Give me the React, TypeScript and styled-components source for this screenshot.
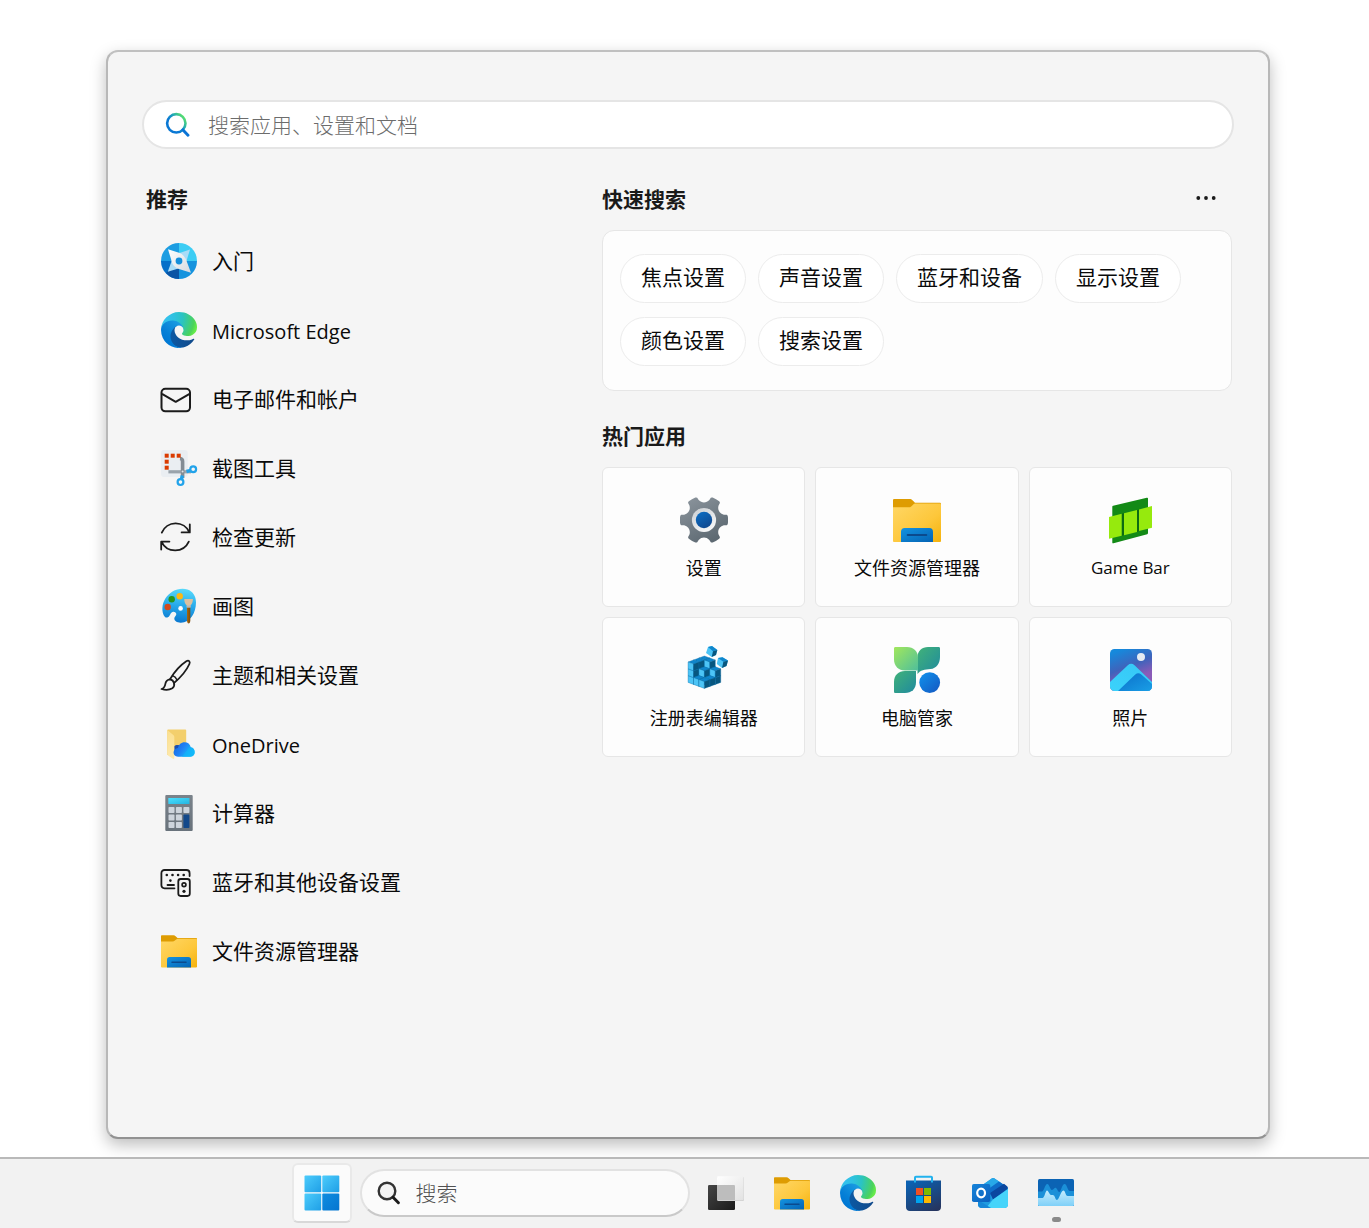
import React from "react";
import styled, { createGlobalStyle } from "styled-components";

const GlobalStyle = createGlobalStyle`
  *, *::before, *::after { box-sizing: border-box; }
  body {
    margin: 0;
    background: #fff;
    color: #0a0a0a;
    font-family: "Open Sans", "Noto Sans CJK SC", sans-serif;
    font-size: 21px;
    line-height: 30px;
  }
  button, input { font: inherit; color: inherit; }
  button { margin: 0; padding: 0; border: 0; background: none; cursor: pointer; }
`;

/* ---------- layout ---------- */

const Desktop = styled.div`
  display: flex;
  flex-direction: column;
  min-height: 100vh;
`;

const Stage = styled.main`
  flex: 1;
  display: flex;
  padding: 50px 99px 18px 106px;
`;

const Panel = styled.section`
  flex: 1;
  min-width: 0;
  padding: 48px 34px;
  background: #f5f5f5;
  border: 2px solid #b8b8b8;
  border-top-color: #c0c0c0;
  border-bottom-color: #929292;
  border-radius: 12px;
  box-shadow: 0 6px 16px rgba(0, 0, 0, 0.26);
`;

const PanelSearch = styled.label`
  display: flex;
  align-items: center;
  gap: 18px;
  height: 49px;
  padding: 0 21px;
  background: #fff;
  border: 2px solid #e5e5e5;
  border-radius: 25px;
`;

const SearchInput = styled.input<{ $tone: string }>`
  flex: 1;
  min-width: 0;
  padding: 0;
  border: 0;
  outline: 0;
  background: transparent;
  font-weight: 300;
  &::placeholder { color: ${(p) => p.$tone}; opacity: 1; }
`;

const Columns = styled.div`
  display: grid;
  grid-template-columns: 46fr 63fr;
  padding-right: 2px;
  margin-top: 35px;
`;

const Heading = styled.h2`
  margin: 0;
  font-size: 21px;
  line-height: 30px;
  font-weight: 700;
  color: #1a1a1a;
`;

const Recommended = styled.section`
  padding-left: 4px;
`;

const AppList = styled.ul`
  list-style: none;
  margin: 13px 0 0;
  padding: 0;
`;

const AppRow = styled.button`
  display: flex;
  align-items: center;
  gap: 14px;
  width: 100%;
  height: 69px;
  padding: 0 14px 1px;
  text-align: left;
`;

const IconSlot = styled.span`
  display: flex;
  align-items: center;
  justify-content: center;
  width: 38px;
  height: 38px;
`;

const RowLabel = styled.span<{ $latin: boolean }>`
  padding-top: ${(p) => (p.$latin ? 3 : 0)}px;
  font-size: ${(p) => (p.$latin ? 20 : 21)}px;
`;

const HeadRow = styled.div`
  display: flex;
  align-items: center;
  justify-content: space-between;
  padding-right: 12px;
`;

const MoreButton = styled.button`
  display: flex;
  align-items: center;
  justify-content: center;
  width: 28px;
  height: 28px;
`;

const QuickBox = styled.div`
  display: flex;
  flex-wrap: wrap;
  gap: 14px 12px;
  margin: 16px 0 30px;
  padding: 23px 17px 24px;
  background: #fdfdfd;
  border: 1px solid #e6e6e6;
  border-radius: 12px;
`;

const Pill = styled.button`
  height: 49px;
  padding: 0 20px 4px;
  background: #fff;
  border: 1px solid #ececec;
  border-radius: 25px;
`;

const CardGrid = styled.div`
  display: grid;
  grid-template-columns: repeat(3, 1fr);
  gap: 10px;
  margin-top: 16px;
`;

const Card = styled.button`
  display: flex;
  flex-direction: column;
  align-items: center;
  gap: 9px;
  height: 140px;
  padding-top: 28px;
  background: #fdfdfd;
  border: 1px solid #e6e6e6;
  border-radius: 6px;
`;

const CardLabel = styled.span<{ $latin: boolean }>`
  font-size: ${(p) => (p.$latin ? 17 : 18)}px;
`;

const Taskbar = styled.footer`
  display: flex;
  align-items: center;
  justify-content: center;
  height: 71px;
  padding: 0 4px 2px 0;
  background: #f2f2f2;
  border-top: 2px solid #b9b9b9;
  position: relative;
`;

const StartButton = styled.button`
  display: flex;
  align-items: center;
  justify-content: center;
  width: 60px;
  height: 60px;
  margin-right: 8px;
  background: #fbfbfb;
  border: 2px solid #e9e9e9;
  border-bottom-color: #d8d8d8;
  border-radius: 6px;
`;

const TaskSearch = styled.label`
  display: flex;
  align-items: center;
  gap: 15px;
  width: 330px;
  height: 48px;
  margin-right: 18px;
  padding: 0 14px 0 15px;
  background: #fbfbfb;
  border: 2px solid #e2e2e2;
  border-bottom-color: #c9c9c9;
  border-radius: 24px;
`;

const TaskApps = styled.nav`
  display: flex;
  gap: 30px;
`;

const TaskButton = styled.button<{ $running?: boolean }>`
  position: relative;
  display: flex;
  width: 36px;
  height: 36px;
  &::after {
    content: "";
    display: ${(p) => (p.$running ? "block" : "none")};
    position: absolute;
    left: 14px;
    bottom: -11px;
    width: 9px;
    height: 5px;
    border-radius: 3px;
    background: #8a8a8a;
  }
`;

/* ---------- list icons ---------- */

const line = {
  fill: "none",
  stroke: "#1b1b1b",
  strokeWidth: 2,
  strokeLinecap: "round" as const,
  strokeLinejoin: "round" as const,
};

const ListSvg = ({ children }: { children: React.ReactNode }) => (
  <svg width="38" height="38" viewBox="0 0 38 38" aria-hidden="true">
    {children}
  </svg>
);

const GetStartedIcon = () => (
  <ListSvg>
    <defs>
      <linearGradient id="gs-star" x1="0" y1="0" x2="1" y2="1">
        <stop offset="0" stopColor="#fff" />
        <stop offset="1" stopColor="#d5d9df" />
      </linearGradient>
    </defs>
    <path d="M19 19V1A18 18 0 0 0 1 19z" fill="#1c9de2" />
    <path d="M19 19H37A18 18 0 0 0 19 1z" fill="#3ccdf4" />
    <path d="M19 19H1A18 18 0 0 0 19 37z" fill="#0670c9" />
    <path d="M19 19V37A18 18 0 0 0 37 19z" fill="#1593de" />
    <path d="M19 19V37A18 18 0 0 1 6 31z" fill="#0a54a4" />
    <path d="M30 7.400 26.500 19 20 26 7.800 29.800 12 18 18 11.500z" fill="#a9dcf7" />
    <path d="M8 7.200 19 10.800Q23.800 12.600 25.800 17L31 30.800 19 27Q14 25.200 12.200 21z" fill="url(#gs-star)" />
    <circle cx="19" cy="19" r="3.400" fill="#158fdb" />
  </ListSvg>
);

const MailIcon = () => (
  <ListSvg>
    <rect x="1.500" y="8.800" width="28.500" height="22.500" rx="3.800" {...line} />
    <path d="M2 13.800 15.700 21.800 29.600 13.800" {...line} strokeLinecap="butt" />
  </ListSvg>
);

const SnipIcon = () => (
  <ListSvg>
    <rect x="1" y="1" width="26.700" height="27" rx="3" fill="#eaeef2" />
    <path d="M8.400 22.800H31" stroke="#9aa3ab" strokeWidth="3.200" />
    <path d="M20 9.500c2 .2 2.600 1.200 2.600 3V29" stroke="#838c94" strokeWidth="3.600" fill="none" />
    <path d="M26.500 22.500 31 21.300M22.400 26.500 21.200 31" stroke="#21a1e8" strokeWidth="3.400" />
    <circle cx="33.200" cy="20.300" r="2.900" fill="#f5f5f5" stroke="#22a3ea" strokeWidth="2.200" />
    <circle cx="20.500" cy="33.100" r="2.900" fill="#f5f5f5" stroke="#22a3ea" strokeWidth="2.200" />
    <circle cx="22.600" cy="22.500" r="1" fill="#dde3e8" />
    <g fill="#da3b01">
      <rect x="4.700" y="4.700" width="4" height="4" />
      <rect x="10.700" y="4.700" width="4" height="4" />
      <rect x="16.700" y="4.700" width="4" height="4" />
      <rect x="4.700" y="10.700" width="4" height="4" />
      <rect x="4.700" y="16.700" width="4" height="4" />
    </g>
  </ListSvg>
);

const SyncIcon = () => (
  <ListSvg>
    <path d="M1.800 14.600A15 15 0 0 1 29.400 14.300M29.800 6.300V14.400H21.600" {...line} strokeWidth={1.800} />
    <path d="M28.800 23.600A15 15 0 0 1 1.600 23.800M1.200 31.600V23.600H9.400" {...line} strokeWidth={1.800} />
  </ListSvg>
);

const PaintIcon = () => (
  <ListSvg>
    <defs>
      <linearGradient id="paint-body" x1="0.6" y1="0" x2="0.5" y2="1">
        <stop offset="0" stopColor="#58d9fb" />
        <stop offset="0.5" stopColor="#27a9ea" />
        <stop offset="1" stopColor="#0a78d0" />
      </linearGradient>
      <linearGradient id="paint-handle" x1="0" y1="0" x2="1" y2="0">
        <stop offset="0" stopColor="#a9680f" />
        <stop offset="1" stopColor="#7d4a0a" />
      </linearGradient>
    </defs>
    <path
      d="M5 30C3 28 2.200 24.500 2.400 21 2.800 14 7 8 12.500 4.600 17 1.900 23 1 27.500 2.600 33 4.500 36 9.500 36 15.500 36 26 30 36 20.500 35.700 17 35.600 14.300 34 14.300 31.600 14.300 29.600 16.300 29 16.300 27.300 16.300 25.500 14.500 24.400 12.600 24.900 10.400 25.500 10 29 8.200 30.100 7.100 30.800 5.900 30.800 5 30z"
      fill="url(#paint-body)"
    />
    <circle cx="7.700" cy="20" r="3.200" fill="#d4491d" />
    <circle cx="11.700" cy="12.300" r="3.200" fill="#26951b" />
    <circle cx="19.700" cy="9.300" r="3.200" fill="#fdb813" />
    <circle cx="20.600" cy="21.400" r="2.300" fill="#fff" />
    <path d="M27 19h3.300v14.500c0 4-3.300 4-3.300 0z" fill="url(#paint-handle)" />
    <path d="M24.300 12h8.600c0 3-.8 5-2.300 6.200v2h-3.900v-2c-1.600-1.200-2.400-3.200-2.400-6.200z" fill="#dcc0a0" />
    <path d="M26.700 18.600h3.900v2h-3.900z" fill="#b0b6bc" />
  </ListSvg>
);

const BrushIcon = () => (
  <ListSvg>
    <path d="M10 23.300C13.800 16.800 19.800 9.600 26.300 5.300c2.400-1.500 4.200.2 3.100 2.700C26.800 13.800 20.400 21.600 14 27" {...line} strokeWidth={1.800} />
    <path
      d="M10 23.300c-2.800.3-4 1.800-4.500 4-.5 2.800-1.500 5-4 5.700 3.800 1.200 8.300.8 10.800-.8 1.800-1.300 2.300-3 1.700-5.200-.6-2.200-2-3.400-4-3.700z"
      {...line}
      strokeWidth={1.800}
    />
    <path d="M12.600 19.600c2 .7 3.600 2.300 4.400 4.500" {...line} strokeWidth={1.500} />
  </ListSvg>
);

const OneDriveIcon = () => (
  <ListSvg>
    <defs>
      <linearGradient id="od-cloud" x1="0" y1="0" x2="1" y2="0.5">
        <stop offset="0" stopColor="#1366dd" />
        <stop offset="0.5" stopColor="#2080f5" />
        <stop offset="1" stopColor="#17c3fb" />
      </linearGradient>
      <linearGradient id="od-flap" x1="0" y1="0" x2="0" y2="1">
        <stop offset="0" stopColor="#fbdf8f" />
        <stop offset="1" stopColor="#fde9ae" />
      </linearGradient>
    </defs>
    <path d="M7.300 5.600c0-.6.400-1 1-1H25c.7 0 1.200.5 1.200 1.200V30H7.300z" fill="#f3cf6c" />
    <path d="M14 21.500c2-2 5-1.800 6-.5L15 31z" fill="#1b4fb0" />
    <path d="M7.300 5 13.300 10c.6.500 1 1.100 1 2v21c0 1-.7 1.300-1.400.8L8 30.400c-.5-.4-.7-.8-.7-1.400z" fill="url(#od-flap)" />
    <path
      d="M18 31.700c-6 0-5.800-8 0-8.600C18.600 19.500 21.300 17.300 24.500 17.300c3.300 0 5.600 2 6.300 4.900 5.400.5 5.300 9.500-.4 9.500z"
      fill="url(#od-cloud)"
    />
    <path d="M22 31.700 29.500 22.300c6-.9 7.300 9.400.9 9.400z" fill="#12b4f8" opacity="0.750" />
  </ListSvg>
);

const CalculatorIcon = () => (
  <ListSvg>
    <defs>
      <linearGradient id="calc-body" x1="0" y1="0" x2="0" y2="1">
        <stop offset="0" stopColor="#7a838b" />
        <stop offset="1" stopColor="#68727b" />
      </linearGradient>
      <linearGradient id="calc-screen" x1="0" y1="0" x2="1" y2="1">
        <stop offset="0" stopColor="#4ae0ff" />
        <stop offset="1" stopColor="#25b4e0" />
      </linearGradient>
    </defs>
    <rect x="5.300" y="1" width="27.400" height="36" rx="1" fill="url(#calc-body)" />
    <rect x="8.300" y="4" width="21.200" height="6" rx="0.600" fill="url(#calc-screen)" />
    {[13, 20.6, 28].map((y) =>
      [8.5, 15.9, 23.4].map((x) =>
        x > 20 && y > 15 ? null : (
          <rect key={`${x}-${y}`} x={x} y={y} width="6" height="6" rx="0.800" fill="#cdd4dc" />
        )
      )
    )}
    <rect x="23.400" y="20.600" width="6" height="13.400" rx="0.800" fill="#12488a" />
  </ListSvg>
);

const DevicesIcon = () => (
  <ListSvg>
    <path d="M14.500 25.300H4.600c-2 0-3.200-1.200-3.200-3.200V10.300c0-2 1.200-3.300 3.200-3.300h21.800c2 0 3.200 1.300 3.200 3.300V13" {...line} strokeWidth={1.800} />
    <rect x="18.300" y="16" width="11.500" height="17" rx="2.400" {...line} strokeWidth={1.800} />
    <circle cx="24" cy="21.700" r="1.900" {...line} strokeWidth={1.700} />
    <g fill="#1b1b1b">
      <circle cx="6.800" cy="12" r="1.300" />
      <circle cx="12.500" cy="12" r="1.300" />
      <circle cx="18.100" cy="12" r="1.300" />
      <circle cx="23.700" cy="12" r="1.300" />
      <circle cx="10.400" cy="17.600" r="1.300" />
      <circle cx="24" cy="28.300" r="1.600" />
    </g>
    <path d="M7.500 22H14" {...line} strokeWidth={1.800} />
  </ListSvg>
);

/* ---------- shared app logos ---------- */

const EdgeIcon = () => (
  <svg width="36" height="36" viewBox="0 0 256 256" aria-hidden="true">
    <defs>
      <linearGradient id="edge-a" x1="63" y1="178" x2="241" y2="178" gradientUnits="userSpaceOnUse">
        <stop offset="0" stopColor="#0c59a4" />
        <stop offset="1" stopColor="#114a8b" />
      </linearGradient>
      <linearGradient id="edge-b" x1="157" y1="100" x2="46" y2="221" gradientUnits="userSpaceOnUse">
        <stop offset="0" stopColor="#1b9de2" />
        <stop offset="0.160" stopColor="#1595df" />
        <stop offset="0.670" stopColor="#0680d7" />
        <stop offset="1" stopColor="#0078d4" />
      </linearGradient>
      <radialGradient id="edge-c" cx="30" cy="45" r="235" gradientUnits="userSpaceOnUse">
        <stop offset="0" stopColor="#35c1f1" />
        <stop offset="0.300" stopColor="#2fc2df" />
        <stop offset="0.550" stopColor="#2bc3c2" />
        <stop offset="0.900" stopColor="#4bd35a" />
        <stop offset="1" stopColor="#66eb4a" />
      </radialGradient>
    </defs>
    <g transform="translate(-4.630 -4.920)">
      <path
        fill="url(#edge-a)"
        d="M235.680 195.460a93.730 93.730 0 0 1-10.540 4.710 101.870 101.870 0 0 1-35.900 6.460c-47.320 0-88.540-32.550-88.540-74.320A31.480 31.480 0 0 1 117.130 105c-42.800 1.800-53.800 46.400-53.800 72.530 0 73.880 68.090 81.370 82.760 81.370 7.910 0 19.840-2.300 27-4.560l1.310-.44a128.340 128.340 0 0 0 66.600-52.800 4 4 0 0 0-5.320-5.640z"
      />
      <path
        fill="url(#edge-b)"
        d="M110.340 246.340A79.200 79.200 0 0 1 87.600 225a80.720 80.720 0 0 1 29.530-120c3.120-1.470 8.450-4.130 15.540-4a32.350 32.350 0 0 1 25.690 13 31.880 31.880 0 0 1 6.360 18.660c0-.21 24.460-79.600-80-79.600-43.900 0-80 41.660-80 78.210a130.150 130.150 0 0 0 12.110 56 128 128 0 0 0 156.380 67.110 75.550 75.550 0 0 1-62.780-8z"
      />
      <path
        fill="url(#edge-c)"
        d="M156.940 153.460c-.81 1.050-3.300 2.500-3.300 5.660 0 2.610 1.700 5.120 4.720 7.230 14.380 10 41.490 8.680 41.560 8.680a59.560 59.560 0 0 0 30.270-8.350A61.380 61.380 0 0 0 260.630 113.660c.26-22.410-8-37.310-11.340-43.910C228.090 28.760 182.350 5.200 132.610 5.200A128 128 0 0 0 4.630 131.400c.48-36.540 36.800-66.050 80-66.050 3.500 0 23.460.34 42 10.070 16.340 8.580 24.900 18.940 30.850 29.210 6.180 10.670 7.280 24.150 7.280 29.520s-2.740 13.330-7.820 19.310z"
      />
    </g>
  </svg>
);

const FolderIcon = ({ size }: { size: number }) => (
  <svg width={size} height={size} viewBox="1 1 36 36" aria-hidden="true">
    <defs>
      <linearGradient id="folder-body" x1="0" y1="0" x2="1" y2="1">
        <stop offset="0" stopColor="#ffd766" />
        <stop offset="0.600" stopColor="#fdc73b" />
        <stop offset="1" stopColor="#f5b20c" />
      </linearGradient>
      <linearGradient id="folder-clip" x1="0" y1="0" x2="1" y2="1">
        <stop offset="0" stopColor="#1493e0" />
        <stop offset="1" stopColor="#0463b4" />
      </linearGradient>
    </defs>
    <path d="M1 4.300c0-.6.400-1 1-1h11.500c.9 0 1.500.3 2.100.9L17.500 6H36c.6 0 1 .4 1 1v4H1z" fill="#de9c02" />
    <path d="M1 9.500h11.500c1 0 1.700-.3 2.400-.9l1.300-1.200c.5-.5 1-.7 1.800-.7H36c.6 0 1 .4 1 1v27c0 .5-.4.800-1 .8H2c-.6 0-1-.3-1-.8z" fill="url(#folder-body)" />
    <path d="M7 35.500v-7.800c0-1.600 1-2.700 2.700-2.700h18.600c1.700 0 2.700 1.100 2.700 2.700v7.800z" fill="url(#folder-clip)" />
    <path d="M12 30.200H26" stroke="#0b4a8d" strokeWidth="1.500" strokeLinecap="round" />
  </svg>
);

/* ---------- card icons ---------- */

const CardSvg = ({ children }: { children: React.ReactNode }) => (
  <svg width="48" height="48" viewBox="0 0 48 48" aria-hidden="true">
    {children}
  </svg>
);

const polar = (radius: number, degrees: number) => {
  const t = (degrees * Math.PI) / 180;
  return `${(24 + radius * Math.cos(t)).toFixed(2)} ${(24 + radius * Math.sin(t)).toFixed(2)}`;
};

const gearPath =
  [0, 60, 120, 180, 240, 300]
    .map(
      (a, i) =>
        `${i === 0 ? "M" : "L"}${polar(20.6, a - 15)} L${polar(23.3, a - 13)} Q${polar(24, a - 12)} ${polar(24.1, a - 9)} Q${polar(24.4, a)} ${polar(24.1, a + 9)} Q${polar(24, a + 12)} ${polar(23.3, a + 13)} L${polar(20.6, a + 15)} C${polar(16.8, a + 22)} ${polar(16.8, a + 38)} ${polar(20.6, a + 45)}`
    )
    .join(" ") + "z";

const SettingsIcon = () => (
  <CardSvg>
    <defs>
      <linearGradient id="gear-body" x1="0" y1="0" x2="0.600" y2="1">
        <stop offset="0" stopColor="#8e979f" />
        <stop offset="1" stopColor="#5d6972" />
      </linearGradient>
      <linearGradient id="gear-ring" x1="0" y1="0" x2="0.600" y2="1">
        <stop offset="0" stopColor="#c9cdd1" />
        <stop offset="1" stopColor="#f6f7f8" />
      </linearGradient>
      <linearGradient id="gear-core" x1="0" y1="0" x2="0.600" y2="1">
        <stop offset="0" stopColor="#0d70c6" />
        <stop offset="1" stopColor="#104a92" />
      </linearGradient>
    </defs>
    <path d={gearPath} fill="url(#gear-body)" />
    <circle cx="24" cy="24" r="12.100" fill="url(#gear-ring)" />
    <circle cx="24" cy="24" r="8.200" fill="url(#gear-core)" />
  </CardSvg>
);

const GameBarIcon = () => (
  <CardSvg>
    <g transform="translate(1 0)">
      <path d="M5.300 10.700c0-.6.300-.9.800-1L39.800 1.700c.8-.2 1.200.1 1.200.8V37c0 .6-.3 1-.8 1.200L6.500 47.200c-.8.200-1.200-.1-1.200-.8z" fill="#138a16" />
      <path d="M14.700 17.700 17 17.300V39.300L14.700 39.700zM30 14 32 13.700V35L30 36z" fill="#0c6b12" />
      <g fill="#96ea0d">
        <path d="M2 21 14.700 17.700V39.700L2 42.700z" />
        <path d="M17 17.200 30 14V36L17 39.300z" />
        <path d="M32 13.500 45 10V31.700L32 35z" />
      </g>
    </g>
  </CardSvg>
);

/* Stack height of every column in the 3 × 3 cube, indexed [a][b]. */
const stacks = [
  [3, 3, 3],
  [3, 2, 1],
  [2, 1, 1],
];

const Cube = ({ a, b, level }: { a: number; b: number; level: number }) => {
  const w = 5.45;
  const s = 2;
  const h = 6.8;
  const x = 24.4 + (a - b) * w;
  const y = 10 + (a + b) * s + (3 - level) * h;
  return (
    <g stroke="#0b6ea8" strokeWidth="0.350">
      <path d={`M${x} ${y}l${w} ${s}l${-w} ${s}l${-w} ${-s}z`} fill="#0f86cc" />
      <path d={`M${x - w} ${y + s}l${w} ${s}v${h}l${-w} ${-s}z`} fill="#4cc4f6" />
      <path d={`M${x + w} ${y + s}l${-w} ${s}v${h}l${w} ${-s}z`} fill="#07567f" />
    </g>
  );
};

const RegistryIcon = () => (
  <CardSvg>
    {stacks.map((row, a) =>
      row.map((count, b) =>
        Array.from({ length: count }, (_, i) => <Cube key={`${a}${b}${i}`} a={a} b={b} level={i + 1} />)
      )
    )}
    <path d="M28 1 32 0 37.300 4 36 9 31.700 11 26 7z" fill="#4cc4f6" />
    <path d="M28 1 32 0 37.300 4 33 5.300z" fill="#0f86cc" />
    <path d="M33 5.300 37.300 4 36 9 31.700 11z" fill="#07567f" />
    <path d="M38 12 42.500 11.300 48 14.500 46.500 20 42 22 36.800 18z" fill="#4cc4f6" />
    <path d="M38 12 42.500 11.300 48 14.500 43.400 15.800z" fill="#0f86cc" />
    <path d="M43.400 15.800 48 14.500 46.500 20 42 22z" fill="#07567f" />
  </CardSvg>
);

const PcManagerIcon = () => (
  <CardSvg>
    <defs>
      <linearGradient id="pm-a" x1="0" y1="0" x2="1" y2="1">
        <stop offset="0" stopColor="#a2e75c" />
        <stop offset="1" stopColor="#4fbf9b" />
      </linearGradient>
      <linearGradient id="pm-b" x1="0" y1="0" x2="1" y2="1">
        <stop offset="0" stopColor="#41b279" />
        <stop offset="1" stopColor="#1f8a9e" />
      </linearGradient>
      <linearGradient id="pm-c" x1="0" y1="0" x2="1" y2="1">
        <stop offset="0" stopColor="#0f93ee" />
        <stop offset="1" stopColor="#1457c0" />
      </linearGradient>
    </defs>
    <path d="M24.500 26V11C24.500 5 29 1 35 1H45.500C46.500 1 47 1.500 47 2.500V11C47 17.500 43.300 22.600 37.500 23 31.500 23.500 27.500 24 24.500 28z" fill="url(#pm-b)" />
    <path d="M1 45.500V36C1 29 5.500 25 12 25H23V36C23 43 18.500 47 12 47H2.500C1.500 47 1 46.500 1 45.500z" fill="url(#pm-b)" />
    <path d="M1 2.500C1 1.500 1.500 1 2.500 1H14C20.500 1 25 5 25 12V23C25 24 24.500 24.500 23.500 24.500H12C5.500 24.500 1 20 1 13.500z" fill="url(#pm-a)" />
    <circle cx="36.700" cy="36.600" r="12.500" fill="#fdfdfd" />
    <circle cx="36.700" cy="36.600" r="10.400" fill="url(#pm-c)" />
  </CardSvg>
);

const PhotosIcon = () => (
  <CardSvg>
    <defs>
      <linearGradient id="ph-sky" x1="0.300" y1="0" x2="0.700" y2="1">
        <stop offset="0" stopColor="#1689dc" />
        <stop offset="0.400" stopColor="#3f63bb" />
        <stop offset="0.700" stopColor="#8a5bb8" />
      </linearGradient>
      <linearGradient id="ph-front" x1="1" y1="0" x2="0" y2="1">
        <stop offset="0" stopColor="#35c6f5" />
        <stop offset="1" stopColor="#3bd2fb" />
      </linearGradient>
      <linearGradient id="ph-back" x1="0" y1="0" x2="1" y2="1">
        <stop offset="0" stopColor="#0a6fca" />
        <stop offset="1" stopColor="#1a9fe6" />
      </linearGradient>
      <clipPath id="ph-clip">
        <rect x="3" y="3" width="42" height="42" rx="4.500" />
      </clipPath>
    </defs>
    <g transform="translate(1 0)">
      <g clipPath="url(#ph-clip)">
        <rect x="3" y="3" width="42" height="42" fill="url(#ph-sky)" />
        <path d="M3 36 20.800 19.200c2-1.900 4.700-1.900 6.700 0L48 39V45H3z" fill="url(#ph-front)" />
        <path d="M11 45 28.300 28.500c1.700-1.700 4-1.700 5.700-.3L46 39V45z" fill="url(#ph-back)" />
      </g>
      <circle cx="34" cy="11" r="4" fill="#e6ebf2" />
    </g>
  </CardSvg>
);

/* ---------- search and taskbar icons ---------- */

const ColorSearchIcon = () => (
  <svg width="25" height="25" viewBox="0 0 25 25" aria-hidden="true">
    <defs>
      <linearGradient id="search-ring" x1="0.900" y1="0.100" x2="0.200" y2="0.700">
        <stop offset="0" stopColor="#5be36a" />
        <stop offset="0.450" stopColor="#1fa5b8" />
        <stop offset="0.800" stopColor="#0a78d4" />
      </linearGradient>
    </defs>
    <circle cx="11.300" cy="11.300" r="9.200" fill="none" stroke="url(#search-ring)" strokeWidth="2.600" />
    <path d="M17.800 17.800 23 23.300" stroke="#0a74d6" strokeWidth="2.900" strokeLinecap="round" />
  </svg>
);

const DarkSearchIcon = () => (
  <svg width="24" height="24" viewBox="0 0 24 24" aria-hidden="true">
    <circle cx="10" cy="10" r="8.300" fill="#f3f3f3" stroke="#333" strokeWidth="2.400" />
    <path d="M16 16.300 21.400 21.700" stroke="#1b1b1b" strokeWidth="3" strokeLinecap="round" />
  </svg>
);

const TaskSvg = ({ children }: { children: React.ReactNode }) => (
  <svg width="36" height="36" viewBox="0 0 36 36" aria-hidden="true">
    {children}
  </svg>
);

const WindowsIcon = () => (
  <TaskSvg>
    <defs>
      <linearGradient id="win-tile" x1="0" y1="0" x2="1" y2="1">
        <stop offset="0" stopColor="#4cccfc" />
        <stop offset="1" stopColor="#1f9fe6" />
      </linearGradient>
      <linearGradient id="win-dark" x1="0" y1="0" x2="1" y2="1">
        <stop offset="0" stopColor="#0f8de0" />
        <stop offset="1" stopColor="#0475d0" />
      </linearGradient>
    </defs>
    <rect x="0.500" y="0.500" width="16.700" height="16.700" rx="1" fill="url(#win-tile)" />
    <rect x="18.300" y="0.500" width="17" height="16.700" rx="1" fill="url(#win-tile)" />
    <rect x="0.500" y="18.500" width="16.700" height="17" rx="1" fill="url(#win-tile)" />
    <rect x="18.300" y="18.500" width="17" height="17" rx="1" fill="url(#win-dark)" />
  </TaskSvg>
);

const TaskViewIcon = () => (
  <TaskSvg>
    <defs>
      <linearGradient id="tv-dark" x1="0" y1="0" x2="1" y2="1">
        <stop offset="0" stopColor="#454545" />
        <stop offset="1" stopColor="#1a1a1a" />
      </linearGradient>
      <linearGradient id="tv-light" x1="0" y1="0" x2="1" y2="1">
        <stop offset="0" stopColor="#fff" />
        <stop offset="1" stopColor="#e2e2e2" />
      </linearGradient>
    </defs>
    <rect x="0" y="10" width="27" height="25" rx="1.300" fill="url(#tv-dark)" />
    <rect x="9.200" y="2" width="26.800" height="24" rx="1.300" fill="#d0d0d0" />
    <rect x="9" y="1.300" width="26.600" height="23.900" rx="1.300" fill="url(#tv-light)" />
    <path d="M9 10H25.700c.8 0 1.300.5 1.300 1.300V25.200H10c-.6 0-1-.4-1-1z" fill="#bdbdbd" />
  </TaskSvg>
);

const StoreIcon = () => (
  <TaskSvg>
    <defs>
      <linearGradient id="store-bag" x1="0.200" y1="0" x2="0.800" y2="1">
        <stop offset="0" stopColor="#0b62b3" />
        <stop offset="1" stopColor="#26355f" />
      </linearGradient>
    </defs>
    <path d="M0 5.500h35V32c0 2.500-1.500 4-4 4H4c-2.500 0-4-1.500-4-4z" fill="url(#store-bag)" />
    <path d="M9 7.500V2.600c0-.6.300-.9.900-.9h15.200c.6 0 .9.300.9.900V7.500" fill="none" stroke="#22b2ee" strokeWidth="2" />
    <path d="M10 13h7v7h-7z" fill="#f25022" />
    <path d="M18 13h7v7h-7z" fill="#7fba00" />
    <path d="M10 21h7v7h-7z" fill="#00a4ef" />
    <path d="M18 21h7v7h-7z" fill="#ffb900" />
  </TaskSvg>
);

const OutlookIcon = () => (
  <TaskSvg>
    <defs>
      <linearGradient id="ol-badge" x1="0" y1="0" x2="1" y2="1">
        <stop offset="0" stopColor="#1784d9" />
        <stop offset="1" stopColor="#0a5fbe" />
      </linearGradient>
    </defs>
    <path d="M6 13 19 4c1.500-1.200 2.800-1.200 4.300 0L34.500 11.500c1 .6 1.500 1.500 1.500 2.600V29.500c0 2-1.500 3.500-3.500 3.500H9.500C7.500 33 6 31.500 6 29.500z" fill="#1e9be0" />
    <path d="M8 12 19 4c1.500-1.200 2.800-1.200 4.300 0L27 6.500 17 14z" fill="#28a8e8" />
    <path d="M17 13.500 27 6.500l5 3.500-14 10z" fill="#0f6cc8" />
    <path d="M18 18 32 8.800 34.800 11c1.300 1 1.300 2.600 0 3.600L21 24.500z" fill="#0a47a0" />
    <path d="M36 14v15.500c0 2-1.500 3.500-3.500 3.500H14l7-8.500z" fill="#46d4fa" />
    <path d="M6 25 19 33H9.500C7.500 33 6 31.500 6 29.500z" fill="#1688d8" />
    <rect x="0" y="9" width="18.300" height="18" rx="1.800" fill="url(#ol-badge)" />
    <ellipse cx="9.100" cy="18" rx="3.900" ry="4.300" fill="none" stroke="#fff" strokeWidth="2.200" />
  </TaskSvg>
);

const MonitorIcon = () => (
  <TaskSvg>
    <defs>
      <linearGradient id="mon-light" x1="0" y1="0" x2="0" y2="1">
        <stop offset="0" stopColor="#c4ecfd" />
        <stop offset="1" stopColor="#7fd0f8" />
      </linearGradient>
      <clipPath id="mon-clip">
        <rect x="0" y="4" width="36" height="27" rx="1.500" />
      </clipPath>
    </defs>
    <g clipPath="url(#mon-clip)">
      <rect x="0" y="4" width="36" height="27" fill="#0b63b4" />
      <path d="M0 16.500H4C6 16.500 7 9 9.300 9 11.500 9 12 15 14 15s2.500-3 4-2 2 4 3.200 4C23 17 24 9 26.600 9 29 9 29.500 16 32 16h4V31H0z" fill="#1b90d8" />
      <path d="M0 23H4.500C6.500 23 7.500 15.500 9 15.500S11.500 20 13 20s2-.5 3 .5 1.500 4.500 3 4.500c2 0 4-9.500 6.300-9.500 2.200 0 2 5.500 4.500 5.500H36V31H0z" fill="url(#mon-light)" />
    </g>
  </TaskSvg>
);

/* ---------- data ---------- */

type Item = { name: string; icon: React.ReactNode };

const isLatin = (text: string) => /^[\x20-\x7e]+$/.test(text);

const recommended: Item[] = [
  { name: "入门", icon: <GetStartedIcon /> },
  { name: "Microsoft Edge", icon: <EdgeIcon /> },
  { name: "电子邮件和帐户", icon: <MailIcon /> },
  { name: "截图工具", icon: <SnipIcon /> },
  { name: "检查更新", icon: <SyncIcon /> },
  { name: "画图", icon: <PaintIcon /> },
  { name: "主题和相关设置", icon: <BrushIcon /> },
  { name: "OneDrive", icon: <OneDriveIcon /> },
  { name: "计算器", icon: <CalculatorIcon /> },
  { name: "蓝牙和其他设备设置", icon: <DevicesIcon /> },
  { name: "文件资源管理器", icon: <FolderIcon size={36} /> },
];

const quickSearches = ["焦点设置", "声音设置", "蓝牙和设备", "显示设置", "颜色设置", "搜索设置"];

const topApps: Item[] = [
  { name: "设置", icon: <SettingsIcon /> },
  { name: "文件资源管理器", icon: <FolderIcon size={48} /> },
  { name: "Game Bar", icon: <GameBarIcon /> },
  { name: "注册表编辑器", icon: <RegistryIcon /> },
  { name: "电脑管家", icon: <PcManagerIcon /> },
  { name: "照片", icon: <PhotosIcon /> },
];

const taskApps: (Item & { running?: boolean })[] = [
  { name: "任务视图", icon: <TaskViewIcon /> },
  { name: "文件资源管理器", icon: <FolderIcon size={36} /> },
  { name: "Microsoft Edge", icon: <EdgeIcon /> },
  { name: "Microsoft Store", icon: <StoreIcon /> },
  { name: "Outlook", icon: <OutlookIcon /> },
  { name: "任务管理器", icon: <MonitorIcon />, running: true },
];

export default function App() {
  return (
    <Desktop>
      <GlobalStyle />
      <Stage>
        <Panel>
          <PanelSearch>
            <ColorSearchIcon />
            <SearchInput
              type="text"
              $tone="#6c6c6c"
              aria-label="搜索应用、设置和文档"
              placeholder="搜索应用、设置和文档"
            />
          </PanelSearch>
          <Columns>
            <Recommended>
              <Heading>推荐</Heading>
              <AppList>
                {recommended.map((item) => (
                  <li key={item.name}>
                    <AppRow type="button">
                      <IconSlot>{item.icon}</IconSlot>
                      <RowLabel $latin={isLatin(item.name)}>{item.name}</RowLabel>
                    </AppRow>
                  </li>
                ))}
              </AppList>
            </Recommended>
            <div>
              <HeadRow>
                <Heading>快速搜索</Heading>
                <MoreButton type="button" aria-label="更多">
                  <svg width="20" height="6" viewBox="0 0 20 6" fill="#1a1a1a" aria-hidden="true">
                    <circle cx="2.300" cy="2" r="1.900" />
                    <circle cx="10" cy="2" r="1.900" />
                    <circle cx="17.700" cy="2" r="1.900" />
                  </svg>
                </MoreButton>
              </HeadRow>
              <QuickBox>
                {quickSearches.map((text) => (
                  <Pill key={text} type="button">
                    {text}
                  </Pill>
                ))}
              </QuickBox>
              <Heading>热门应用</Heading>
              <CardGrid>
                {topApps.map((item) => (
                  <Card key={item.name} type="button">
                    {item.icon}
                    <CardLabel $latin={isLatin(item.name)}>{item.name}</CardLabel>
                  </Card>
                ))}
              </CardGrid>
            </div>
          </Columns>
        </Panel>
      </Stage>
      <Taskbar>
        <StartButton type="button" aria-label="开始">
          <WindowsIcon />
        </StartButton>
        <TaskSearch>
          <DarkSearchIcon />
          <SearchInput type="text" $tone="#505050" aria-label="搜索" placeholder="搜索" />
        </TaskSearch>
        <TaskApps>
          {taskApps.map((item) => (
            <TaskButton key={item.name} type="button" aria-label={item.name} $running={item.running}>
              {item.icon}
            </TaskButton>
          ))}
        </TaskApps>
      </Taskbar>
    </Desktop>
  );
}
